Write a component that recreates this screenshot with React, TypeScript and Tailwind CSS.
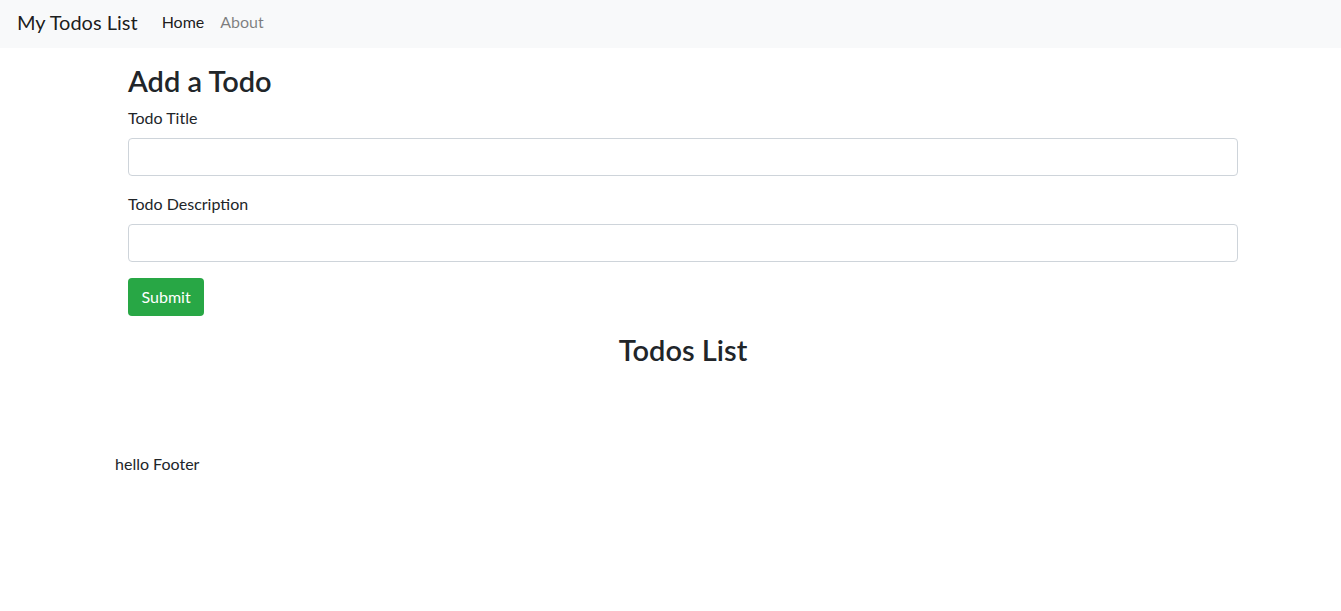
export default function App() {
  return (
    <div className="min-h-[611px] bg-white font-['Lato',sans-serif] text-[#212529]">
      <nav className="flex h-[48px] items-center bg-[#f8f9fa] px-[17px] pb-[4px]">
        <span className="mr-[16px] text-[20px] leading-[30px] text-black/90">My Todos List</span>
        <a className="px-[8px] text-[16px] leading-[24px] text-black/90">Home</a>
        <a className="px-[8px] text-[16px] leading-[24px] text-black/50">About</a>
      </nav>
      <div className="ml-[128px] w-[1110px]">
        <h3 className="mt-[16px] mb-[8px] text-[29px] font-semibold leading-[33.6px]">Add a Todo</h3>
        <div className="mb-[16px]">
          <label className="mb-[8px] block text-[16px] leading-[24px]">Todo Title</label>
          <input className="block h-[38px] w-full rounded-[4px] border border-[#ced4da] px-[12px]" />
        </div>
        <div className="mb-[16px]">
          <label className="mb-[8px] block text-[16px] leading-[24px]">Todo Description</label>
          <input className="block h-[38px] w-full rounded-[4px] border border-[#ced4da] px-[12px]" />
        </div>
        <button className="h-[38px] rounded-[4px] bg-[#28a745] px-[13.5px] text-[16px] text-white">Submit</button>
        <h3 className="mt-[17px] text-center text-[29px] font-semibold leading-[33.6px]">Todos List</h3>
      </div>
      <footer className="ml-[115px] mt-[86px] text-[16px] leading-[24px]">hello Footer</footer>
    </div>
  );
}
